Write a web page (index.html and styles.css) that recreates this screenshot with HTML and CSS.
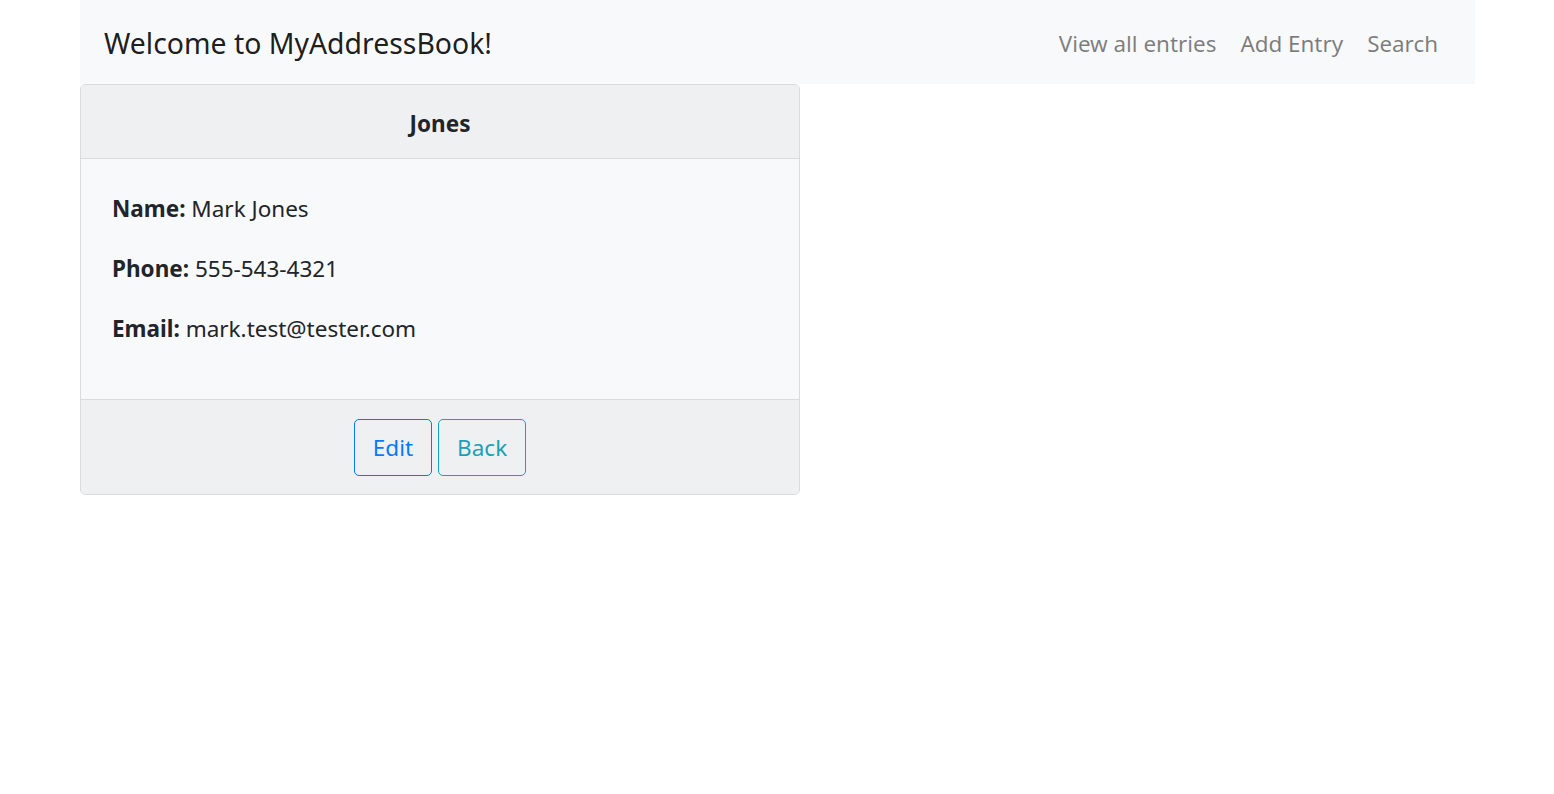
FILE: index.html
```html
<!DOCTYPE html>
<html lang="en">
<head>
<meta charset="utf-8">
<title>MyAddressBook</title>
<link rel="stylesheet" href="styles.css">
</head>
<body>
<div class="container">
  <nav class="navbar">
    <a class="brand" href="#">Welcome to MyAddressBook!</a>
    <ul class="nav-links">
      <li><a href="#">View all entries</a></li>
      <li><a href="#">Add Entry</a></li>
      <li><a href="#">Search</a></li>
    </ul>
  </nav>
  <div class="card">
    <div class="card-header">Jones</div>
    <div class="card-body">
      <p><strong>Name:</strong> Mark Jones</p>
      <p><strong>Phone:</strong> 555-543-4321</p>
      <p><strong>Email:</strong> mark.test@tester.com</p>
    </div>
    <div class="card-footer">
      <a class="btn btn-primary" href="#">Edit</a>
      <a class="btn btn-info" href="#">Back</a>
    </div>
  </div>
</div>
</body>
</html>
```
FILE: styles.css
```css
* { box-sizing: border-box; }
html, body { margin: 0; padding: 0; }
body {
  font-family: "Noto Sans", "Open Sans", sans-serif;
  font-size: 22.5px;
  color: #212529;
  background: #fff;
}
.container {
  margin: 0 79px 0 80px;
}
.navbar {
  background: #f8f9fa;
  height: 84px;
  display: flex;
  align-items: center;
  justify-content: space-between;
  padding: 2px 25px 0 24px;
}
.brand {
  font-size: 28.4px;
  color: rgba(0,0,0,.9);
  text-decoration: none;
}
.nav-links {
  list-style: none;
  margin: 0;
  padding: 0;
  display: flex;
}
.nav-links a {
  display: block;
  padding: 0 12px;
  color: rgba(0,0,0,.5);
  text-decoration: none;
  font-size: 22.4px;
}
.card {
  width: 720px;
  border: 1px solid #dadbdc;
  border-radius: 5px;
  background: #f8f9fa;
  overflow: hidden;
}
.card-header {
  background: #eff0f2;
  border-bottom: 1px solid #dadbdc;
  text-align: center;
  font-weight: 700;
  font-size: 22.5px;
  line-height: 30px;
  padding: 24px 20px 19px;
}
.card-body {
  padding: 35px 31px 25px;
}
.card-body p {
  margin: 0 0 30px;
  line-height: 30px;
}
.card-body strong { font-weight: 700; }
.card-footer {
  background: #eff0f2;
  border-top: 1px solid #dadbdc;
  display: flex;
  justify-content: center;
  gap: 6px;
  padding: 19px 20px 18px;
}
.btn {
  display: inline-block;
  border: 1px solid;
  border-radius: 5px;
  padding: 12px 18px;
  line-height: 31px;
  font-size: 22.5px;
  text-decoration: none;
}
.btn-primary { color: #007bff; border-color: #007bff; }
.btn-info { color: #17a2b8; border-color: #17a2b8; }
```
